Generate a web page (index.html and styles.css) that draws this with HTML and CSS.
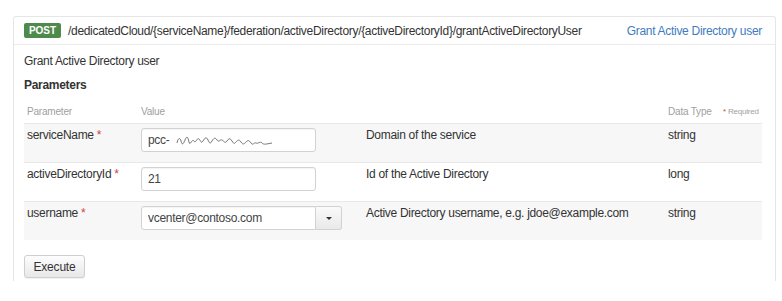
FILE: index.html
```html
<!DOCTYPE html>
<html lang="en">

<head>
    <meta charset="UTF-8">
    <meta name="viewport" content="width=device-width, initial-scale=1.0">
    <title>Grant Active Directory user</title>
    <link rel="stylesheet" href="styles.css">
</head>

<body>
    <div class="operation">
        <!-- Operation header -->
        <div class="op-heading">
            <span class="verb">POST</span>
            <span class="path">/dedicatedCloud/{serviceName}/federation/activeDirectory/{activeDirectoryId}/grantActiveDirectoryUser</span>
            <a class="op-summary" href="#">Grant Active Directory user</a>
        </div>

        <!-- Operation body -->
        <div class="op-body">
            <p class="op-desc">Grant Active Directory user</p>
            <h4>Parameters</h4>

            <table class="params">
                <thead>
                    <tr>
                        <th class="col-name">Parameter</th>
                        <th class="col-value">Value</th>
                        <th class="col-desc"></th>
                        <th class="col-type">Data Type</th>
                        <th class="col-req"><span class="star">*</span> Required</th>
                    </tr>
                </thead>
                <tbody>
                    <tr>
                        <td class="col-name">serviceName <span class="star">*</span></td>
                        <td class="col-value">
                            <div class="field">pcc-
                                <svg class="scribble" width="98" height="12" viewBox="0 0 98 12">
                                    <path d="M1 8 C2 3 4 2 5 6 S7 10 9 5 S12 2 13 7 S16 3 18 6 C20 9 21 2 23 4 S25 9 27 6 C29 3 30 1 32 5 S34 9 36 6 S39 2 41 5 C43 8 44 4 46 5 S49 9 51 6 S54 3 56 6 S58 9 60 7 S63 4 65 7 S68 9 70 7 S73 5 75 8 S78 7 80 8 S84 6 86 8 S90 9 96 8" fill="none" stroke="#666" stroke-width="0.9"/>
                                </svg>
                            </div>
                        </td>
                        <td class="col-desc">Domain of the service</td>
                        <td class="col-type">string</td>
                        <td></td>
                    </tr>
                    <tr>
                        <td class="col-name">activeDirectoryId <span class="star">*</span></td>
                        <td class="col-value">
                            <div class="field">21</div>
                        </td>
                        <td class="col-desc">Id of the Active Directory</td>
                        <td class="col-type">long</td>
                        <td></td>
                    </tr>
                    <tr>
                        <td class="col-name">username <span class="star">*</span></td>
                        <td class="col-value">
                            <div class="combo">
                                <div class="field">vcenter@contoso.com</div>
                                <div class="combo-btn"><span class="caret"></span></div>
                            </div>
                        </td>
                        <td class="col-desc">Active Directory username, e.g. jdoe@example.com</td>
                        <td class="col-type">string</td>
                        <td></td>
                    </tr>
                </tbody>
            </table>

            <button class="btn">Execute</button>
        </div>
    </div>
</body>

</html>
```

FILE: styles.css
```css
/* Page */
body {
    margin: 0;
    background: #fff;
    font-family: "Liberation Sans", Arial, sans-serif;
    font-size: 12px;
    letter-spacing: -0.3px;
    color: #333;
}

.operation {
    margin: 16px 6px 0 13px;
    height: 264px;
    border: 1px solid #e6e6e6;
    border-bottom: none;
    border-radius: 3px 3px 0 0;
}

/* Header */
.op-heading {
    display: flex;
    align-items: center;
    height: 27px;
    padding: 0 13px 0 10px;
    border-bottom: 1px solid #ebebeb;
}

.verb {
    display: inline-block;
    width: 37px;
    height: 15px;
    line-height: 15px;
    margin-right: 7px;
    text-align: center;
    font-size: 10px;
    font-weight: bold;
    letter-spacing: 0;
    color: #fff;
    background: #4f8a4d;
    border-radius: 2px;
}

.path {
    color: #333;
    font-size: 12px;
    letter-spacing: -0.31px;
}

.op-summary {
    margin-left: auto;
    color: #3f7cc0;
    text-decoration: none;
}

/* Body */
.op-body {
    padding: 8px 13px 0 10px;
}

.op-desc {
    margin: 0;
    line-height: 16px;
}

.op-body h4 {
    margin: 8px 0 0;
    line-height: 16px;
    font-size: 12px;
    font-weight: bold;
}

/* Parameters table */
.params {
    width: 100%;
    margin-top: 8px;
    border-collapse: collapse;
}

.params th {
    padding: 4px 0;
    line-height: 14px;
    text-align: left;
    font-size: 10px;
    font-weight: normal;
    letter-spacing: -0.2px;
    color: #a0a0a0;
    border-bottom: 1px solid #e8e8e8;
}

.params td {
    padding: 4px 0 10px;
    line-height: 14px;
    vertical-align: top;
}

.params tbody tr {
    border-bottom: 1px solid #e8e8e8;
}

.params tbody tr:nth-child(odd) {
    background: #f7f7f7;
}

.params tbody tr:last-child {
    border-bottom: none;
}

.col-name {
    width: 114px;
    padding-left: 3px !important;
}

.col-value {
    width: 225px;
}

.col-desc {
    width: 302px;
}

.col-type {
    width: 55px;
}

.params th.col-req {
    font-size: 8px;
}

.star {
    color: #d0453f;
}

/* Inputs */
.field {
    box-sizing: border-box;
    width: 175px;
    height: 24px;
    padding: 0 6px;
    line-height: 22px;
    color: #444;
    background: #fff;
    border: 1px solid #d2d2d2;
    border-radius: 3px;
    box-shadow: inset 0 1px 1px rgba(0, 0, 0, 0.05);
    white-space: nowrap;
}

.scribble {
    vertical-align: middle;
    margin-left: 3px;
}

.combo {
    display: flex;
    width: 201px;
}

.combo .field {
    width: 175px;
    border-radius: 3px 0 0 3px;
}

.combo-btn {
    box-sizing: border-box;
    width: 26px;
    height: 24px;
    display: flex;
    align-items: center;
    justify-content: center;
    border: 1px solid #d2d2d2;
    border-left: none;
    border-radius: 0 3px 3px 0;
    background: linear-gradient(#fafafa, #e9e9e9);
}

.caret {
    width: 0;
    height: 0;
    border-left: 3px solid transparent;
    border-right: 3px solid transparent;
    border-top: 3px solid #333;
}

/* Button */
.btn {
    margin-top: 15px;
    width: 61px;
    height: 23px;
    padding: 0;
    font-family: inherit;
    font-size: 12px;
    letter-spacing: -0.2px;
    color: #333;
    background: linear-gradient(#fdfdfd, #e8e8e8);
    border: 1px solid #cfcfcf;
    border-radius: 3px;
    box-shadow: 0 1px 1px rgba(0, 0, 0, 0.06);
}
```
